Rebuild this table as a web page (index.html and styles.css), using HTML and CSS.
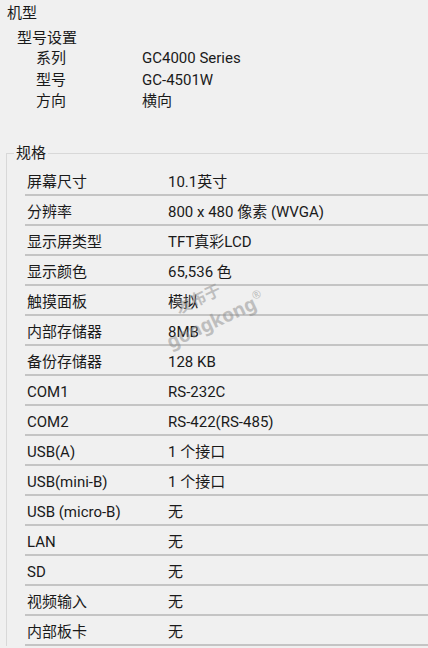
FILE: index.html
```html
<!DOCTYPE html>
<html lang="zh-CN">
<head>
<meta charset="utf-8">
<title>机型</title>
<link rel="stylesheet" href="styles.css">
</head>
<body>
<div class="page">
  <section class="model">
    <div class="h1">机型</div>
    <div class="h2">型号设置</div>
    <div class="kv"><span class="k">系列</span><span class="v">GC4000 Series</span></div>
    <div class="kv"><span class="k">型号</span><span class="v">GC-4501W</span></div>
    <div class="kv"><span class="k">方向</span><span class="v">横向</span></div>
  </section>
  <fieldset class="spec">
    <legend>规格</legend>
    <div class="row"><span class="k">屏幕尺寸</span><span class="v">10.1英寸</span></div>
    <div class="row"><span class="k">分辨率</span><span class="v">800 x 480 像素 (WVGA)</span></div>
    <div class="row"><span class="k">显示屏类型</span><span class="v">TFT真彩LCD</span></div>
    <div class="row"><span class="k">显示颜色</span><span class="v">65,536 色</span></div>
    <div class="row"><span class="k">触摸面板</span><span class="v">模拟</span></div>
    <div class="row"><span class="k">内部存储器</span><span class="v">8MB</span></div>
    <div class="row"><span class="k">备份存储器</span><span class="v">128 KB</span></div>
    <div class="row"><span class="k">COM1</span><span class="v">RS-232C</span></div>
    <div class="row"><span class="k">COM2</span><span class="v">RS-422(RS-485)</span></div>
    <div class="row"><span class="k">USB(A)</span><span class="v">1 个接口</span></div>
    <div class="row"><span class="k">USB(mini-B)</span><span class="v">1 个接口</span></div>
    <div class="row"><span class="k">USB (micro-B)</span><span class="v">无</span></div>
    <div class="row"><span class="k">LAN</span><span class="v">无</span></div>
    <div class="row"><span class="k">SD</span><span class="v">无</span></div>
    <div class="row"><span class="k">视频输入</span><span class="v">无</span></div>
    <div class="row"><span class="k">内部板卡</span><span class="v">无</span></div>
  </fieldset>
  <div class="watermark" aria-hidden="true">
    <div class="wm1">发布于</div>
    <div class="wm2">gongkong<sup>®</sup></div>
  </div>
</div>
</body>
</html>
```

FILE: styles.css
```css
html, body {
  margin: 0;
  padding: 0;
  background: #f0f0f0;
}
body {
  font-family: Roboto, "Noto Sans CJK SC", sans-serif;
  font-size: 15px;
  color: #1a1a1a;
  overflow: hidden;
  width: 428px;
  height: 648px;
}
.page {
  position: relative;
  height: 648px;
  overflow: hidden;
}
.model {
  padding-top: 3px;
}
.h1 {
  line-height: 20px;
  padding-left: 7px;
}
.h2 {
  margin-top: 5px;
  line-height: 20px;
  padding-left: 17px;
}
.kv {
  display: flex;
  line-height: 21.5px;
  padding-left: 36px;
}
.kv .k {
  width: 106px;
  flex: none;
}
.spec {
  margin: 30.5px 0 0 6px;
  padding: 3px 0 0 18px;
  border: 1px solid #d8d8d8;
  border-right: none;
  border-bottom: none;
  min-inline-size: 0;
}
.spec legend {
  margin-left: -11px;
  padding: 0 2px;
  line-height: 20px;
}
.row {
  display: flex;
  box-sizing: border-box;
  height: 30px;
  padding-top: 6px;
  line-height: 20px;
  padding-left: 2px;
  border-bottom: 2px solid #c4c4c4;
}
.row .k {
  width: 141px;
  flex: none;
}
.watermark {
  position: absolute;
  left: 152px;
  top: 309px;
  transform: rotate(-25deg);
  transform-origin: left top;
  color: rgba(140, 140, 140, 0.5);
  font-family: "Noto Sans", sans-serif;
  font-weight: 700;
  pointer-events: none;
}
.wm1 {
  font-family: "Noto Sans CJK SC", sans-serif;
  font-size: 16px;
  line-height: 18px;
  padding-left: 22px;
}
.wm2 {
  margin-top: 3px;
  font-size: 19px;
  line-height: 20px;
}
.wm2 sup {
  font-size: 11px;
  font-weight: 400;
  vertical-align: 9px;
}
```
